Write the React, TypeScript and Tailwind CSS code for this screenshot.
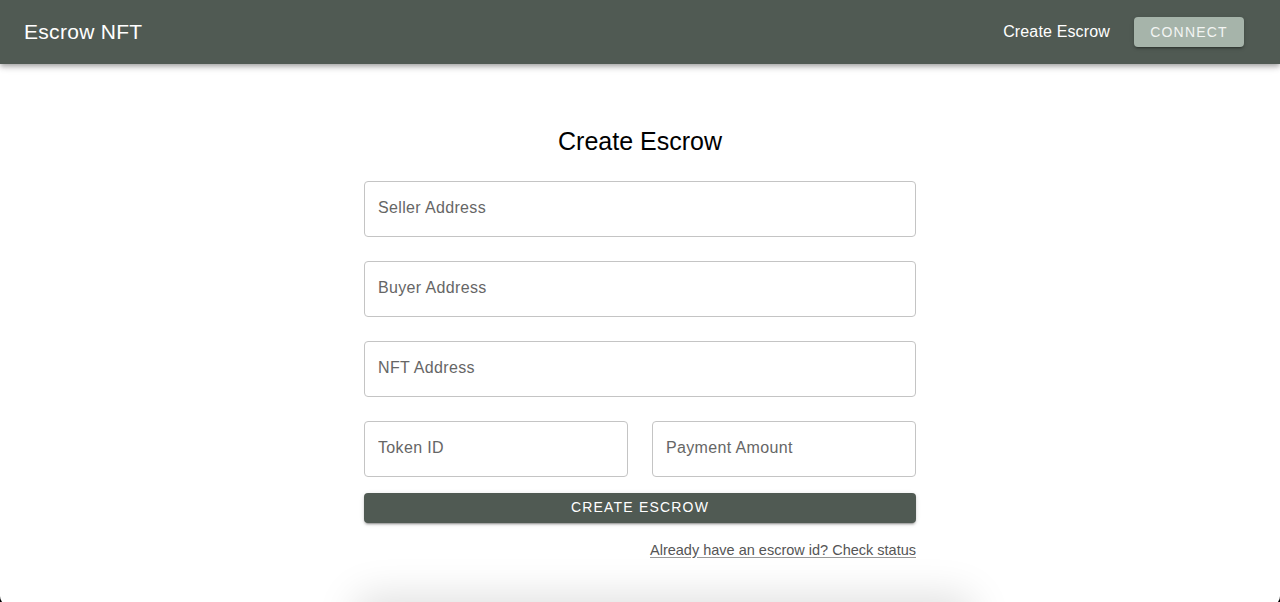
import { useState } from 'react'

const fields = ['Seller Address', 'Buyer Address', 'NFT Address']

function Field({ label, value, onChange }: { label: string; value: string; onChange: (v: string) => void }) {
  return (
    <input
      className="h-14 w-full rounded border border-[#c4c4c4] px-[13px] pb-[2px] text-base tracking-[0.35px] text-[#222] placeholder:text-[#666] outline-none focus:border-[#505a53]"
      placeholder={label}
      value={value}
      onChange={(e) => onChange(e.target.value)}
    />
  )
}

export default function App() {
  const [values, setValues] = useState<Record<string, string>>({})
  const set = (key: string) => (v: string) => setValues((prev) => ({ ...prev, [key]: v }))

  return (
    <div className="h-screen overflow-hidden bg-black font-['Liberation_Sans',Arial,sans-serif]">
      <div className="h-[606px] overflow-hidden rounded-b-[10px] bg-white">
        {/* Header */}
        <header className="relative z-10 flex h-16 items-center justify-between bg-[#505a53] pl-6 pr-9 shadow-[0_2px_4px_-1px_rgba(0,0,0,0.2),0_4px_5px_0_rgba(0,0,0,0.14),0_1px_10px_0_rgba(0,0,0,0.12)]">
          <h1 className="pb-[1px] text-[21px] tracking-[0.3px] text-white">Escrow NFT</h1>
          <div className="flex items-center gap-6">
            <a className="text-base tracking-[0.15px] text-white">Create Escrow</a>
            <button className="h-[30px] w-[110px] rounded bg-[#a6b4aa] pb-[1px] text-sm uppercase tracking-[1.2px] text-[#f3f5f3] shadow-[0_3px_1px_-2px_rgba(0,0,0,0.2),0_2px_2px_0_rgba(0,0,0,0.14),0_1px_5px_0_rgba(0,0,0,0.12)]">
              Connect
            </button>
          </div>
        </header>

        {/* Form */}
        <main className="mx-auto flex w-[552px] flex-col pt-[59px]">
          <h2 className="mb-[20px] text-center text-[25px] text-black">Create Escrow</h2>
          <div className="flex flex-col gap-6">
            {fields.map((f) => (
              <Field key={f} label={f} value={values[f] || ''} onChange={set(f)} />
            ))}
            <div className="flex gap-6">
              <Field label="Token ID" value={values.token || ''} onChange={set('token')} />
              <Field label="Payment Amount" value={values.amount || ''} onChange={set('amount')} />
            </div>
          </div>
          <button className="mt-4 h-[30px] w-full rounded bg-[#505a53] pb-[1px] text-sm uppercase tracking-[1.2px] text-white shadow-[0_3px_1px_-2px_rgba(0,0,0,0.2),0_2px_2px_0_rgba(0,0,0,0.14),0_1px_5px_0_rgba(0,0,0,0.12)]">
            Create Escrow
          </button>
          <a className="mt-[17px] self-end text-[14.5px] text-[#555] underline decoration-[#999] underline-offset-2">
            Already have an escrow id? Check status
          </a>
          <div className="mx-auto mt-[43px] h-40 w-[600px] rounded bg-white shadow-[0_0_40px_8px_rgba(0,0,0,0.13)]" />
        </main>
      </div>
    </div>
  )
}
